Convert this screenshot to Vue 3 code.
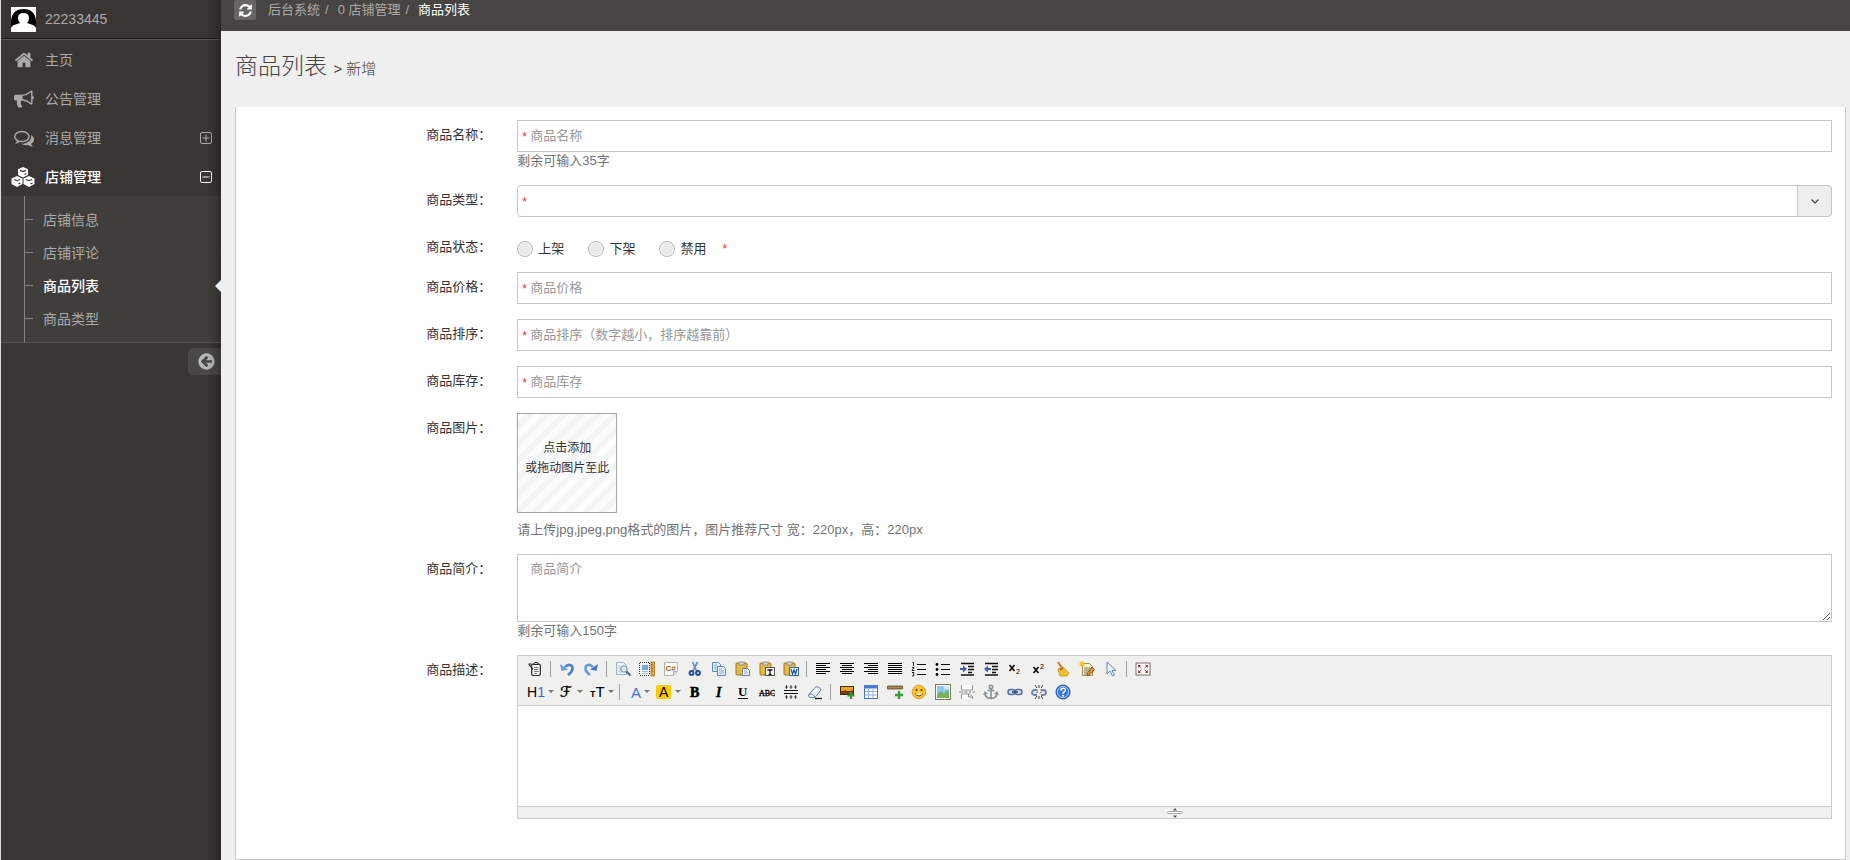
<script setup>
import { ref } from 'vue'

const fa = {
  home: 'M1472 992v480q0 26-19 45t-45 19h-384v-384h-256v384h-384q-26 0-45-19t-19-45v-480q0-1 .5-3t.5-3l575-474 575 474q1 2 1 6zm223-69l-62 74q-8 9-21 11h-3q-13 0-21-7l-692-577-692 577q-12 8-24 7-13-2-21-11l-62-74q-8-10-7-23.5t11-21.5l719-599q32-26 76-26t76 26l244 204v-195q0-14 9-23t23-9h192q14 0 23 9t9 23v408l219 182q10 8 11 21.5t-7 23.5z',
  bullhorn: 'M1664 640q53 0 90.5 37.5t37.5 90.5-37.5 90.5-90.5 37.5v384q0 52-38 90t-90 38q-417-347-812-380-58 19-91 66t-31 100.5 40 92.5q-20 33-23 65.5t6 58 33.5 55 48 50 61.5 50.5q-29 58-111.5 83t-168.5 11.5-132-55.5q-7-23-29.5-87.5t-32-94.5-23-89-15-101 3.5-98.5 22-110.5h-122q-66 0-113-47t-47-113v-192q0-66 47-113t113-47h480q435 0 896-384 52 0 90 38t38 90v384zm-128 604v-954q-394 302-768 343v270q377 42 768 341z',
  comments: 'M704 384q-153 0-286 52t-211.5 141-78.5 191q0 82 53 158t149 132l97 56-35 84q34-20 62-39l44-31 53 10q78 14 153 14 153 0 286-52t211.5-141 78.5-191-78.5-191-211.5-141-286-52zm0-128q191 0 353.5 68.5t256.5 186.5 94 257-94 257-256.5 186.5-353.5 68.5q-86 0-176-16-124 88-278 128-36 9-86 16h-3q-11 0-20.5-8t-11.5-21q-1-3-1-6.5t.5-6.5 2-6l2.5-5 3.5-5.5 4-5 4.5-5 4-4.5q5-6 23-25t26-29.5 22.5-29 25-38.5 20.5-44q-124-72-195-177t-71-224q0-139 94-257t256.5-186.5 353.5-68.5zm822 1169q10 24 20.5 44t25 38.5 22.5 29 26 29.5 23 25q1 1 4 4.5t4.5 5 4 5 3.5 5.5l2.5 5 2 6 .5 6.5-1 6.5q-3 14-13 22t-22 7q-50-7-86-16-154-40-278-128-90 16-176 16-271 0-472-132 58 4 88 4 161 0 309-45t264-129q125-92 192-212t67-254q0-77-23-152 129 71 204 178t75 230q0 120-71 224.5t-195 176.5z',
  refresh: 'M1639 1056q0 5-1 7-64 268-268 434.5t-478 166.5q-146 0-282.5-55t-243.5-157l-129 129q-19 19-45 19t-45-19-19-45v-448q0-26 19-45t45-19h448q26 0 45 19t19 45-19 45l-137 137q71 66 161 102t187 36q134 0 250-65t186-179q11-17 53-117 8-23 30-23h192q13 0 22.5 9.5t9.5 22.5zm25-800v448q0 26-19 45t-45 19h-448q-26 0-45-19t-19-45 19-45l138-138q-148-137-349-137-134 0-250 65t-186 179q-11 17-53 117-8 23-30 23h-199q-13 0-22.5-9.5t-9.5-22.5v-7q65-268 270-434.5t480-166.5q146 0 284 55.5t245 156.5l130-129q19-19 45-19t45 19 19 45z',
  back: 'M1408 960v-128q0-26-19-45t-45-19h-502l189-189q19-19 19-45t-19-45l-91-91q-18-18-45-18t-45 18l-362 362-91 91q-18 18-18 45t18 45l91 91 362 362q18 18 45 18t45-18l91-91q18-18 18-45t-18-45l-189-189h502q26 0 45-19t19-45zm256-64q0 209-103 385.5t-279.5 279.5-385.5 103-385.5-103-279.5-279.5-103-385.5 103-385.5 279.5-279.5 385.5-103 385.5 103 279.5 279.5 103 385.5z'
}

const menu = [
  { label: '主页', icon: 'home' },
  { label: '公告管理', icon: 'bullhorn' },
  { label: '消息管理', icon: 'comments', toggle: 'plus' },
  { label: '店铺管理', icon: 'cubes', toggle: 'minus', active: true }
]
const submenu = ['店铺信息', '店铺评论', '商品列表', '商品类型']
const current = '商品列表'

const board =
  '<rect x="1" y="2" width="11" height="12" rx="1" fill="#e9b845" stroke="#9a7420"/><rect x="4" y="1" width="5" height="3" fill="#d8d8d8" stroke="#777" stroke-width=".7"/>'
const lines = (rows) =>
  rows.map(([x, w], i) => `<rect x="${x}" y="${2 + i * 2}" width="${w}" height="1"/>`).join('')

const glyphs = {
  source:
    '<rect x="4.700" y="3" width="8.600" height="11.500" rx="1.500" fill="#fff" stroke="#222" stroke-width="1.200"/><path d="M6.500 3.500l1-2h3l1 2z" fill="#ddd" stroke="#222"/><path d="M7 6.500h4.500M7 8.500h4.500M7 10.500h4.500M7 12.500h3" stroke="#555" stroke-width=".8"/><path d="M1.500 3h3M2 3.500l4 5" fill="none" stroke="#222" stroke-width="1.200"/>',
  undo: '<path d="M6 6c3-3.500 8-2.500 7.500 2-.3 2.500-2 4-4.500 6" fill="none" stroke="#4f7fd0" stroke-width="2.600"/><path d="M1 3l1.500 7L9 8.500z" fill="#6a9be2"/>',
  redo: '<path d="M10 6C7 2.500 2 3.500 2.500 8c.3 2.500 2 4 4.500 6" fill="none" stroke="#6a9be2" stroke-width="2.600"/><path d="M15 3l-1.500 7L7 8.500z" fill="#4379c8"/>',
  preview:
    '<path d="M1.500 1.500h7l3 3v9h-10z" fill="#f4f8fb" stroke="#9eb0bd"/><path d="M3 5h3M3 7h3M3 9h3M3 11h4" stroke="#b5c6d6"/><circle cx="9" cy="8" r="3.200" fill="#dcecf8" stroke="#728ca4"/><path d="M11.500 10.500l4 4" stroke="#55677a" stroke-width="2"/>',
  template:
    '<path d="M1 1.500h9M1 14.500h9" stroke="#333" stroke-dasharray="1 1"/><path d="M.5 2v12M10.500 2v12" stroke="#333" stroke-dasharray="1 1"/><rect x="3" y="4" width="6" height="5" fill="#77a7dd"/><path d="M3 10.500h6M3 12.500h6" stroke="#9dbce0"/><rect x="12" y="1" width="3.500" height="14" fill="#e4a43b" stroke="#ad7420" stroke-width=".8"/><path d="M12 4h2M12 7h2M12 10h2" stroke="#84530f" stroke-width=".7"/>',
  code:
    '<path d="M1.500 1.500h13v9l-4 4h-9z" fill="#fbfaf6" stroke="#b9b3a5"/><path d="M14 10.500h-3.500v4" fill="#ddd" stroke="#b9b3a5"/><text x="2.500" y="10" font-size="8" font-weight="bold" font-family="Liberation Sans, Arial, sans-serif" fill="#8b6a20">C#</text>',
  cut: '<path d="M5.500 1l4.500 10M10.500 1L6 10" stroke="#6d8fbb" stroke-width="1.700"/><circle cx="4.500" cy="12" r="1.900" fill="none" stroke="#254f94" stroke-width="2"/><circle cx="11" cy="12" r="1.900" fill="none" stroke="#254f94" stroke-width="2"/>',
  copy:
    '<path d="M1.500 1.500h6l2 2v7h-8z" fill="#e8f1fc" stroke="#5b87c4"/><path d="M3 4h3M3 6h5M3 8h5" stroke="#86aadb"/><path d="M6.500 5.500h6l2 2v7h-8z" fill="#e8f1fc" stroke="#5b87c4"/><path d="M8 8h3M8 10h5M8 12h5" stroke="#86aadb"/>',
  paste: board + '<path d="M7.500 7.500h5l2 2v5h-7z" fill="#f3f6fb" stroke="#6d7c90"/><path d="M9 10h3M9 12h4" stroke="#8ba6c8"/>',
  plainpaste: board + '<rect x="6.500" y="6.500" width="9" height="8" fill="#fff" stroke="#555"/><path d="M8.500 9h5M11 9v5M9.500 13.500h3" stroke="#111" stroke-width="1.300"/>',
  wordpaste: board + '<rect x="6.500" y="6.500" width="9" height="8" fill="#e5efff" stroke="#3b69ae"/><path d="M8 8l1.500 5 1.500-4 1.500 4L14 8" fill="none" stroke="#2458a8" stroke-width="1.300"/>',
  left: lines([[1, 14], [1, 10], [1, 14], [1, 10], [1, 14], [1, 10]]),
  center: lines([[1, 14], [3, 10], [1, 14], [3, 10], [1, 14], [3, 10]]),
  right: lines([[1, 14], [5, 10], [1, 14], [5, 10], [1, 14], [5, 10]]),
  full: lines([[1, 14], [1, 14], [1, 14], [1, 14], [1, 14], [1, 14]]),
  ol: '<path d="M6 3.500h9M6 8.500h9M6 13.500h9" stroke="#111"/><path d="M1.500 2l1-1v4M1 6.500h2l-2 3h2.500M1 11.500h2l-1 1.500 1 .5-.5 1.500H1" fill="none" stroke="#111" stroke-width=".9"/>',
  ul: '<path d="M6 3.500h9M6 8.500h9M6 13.500h9" stroke="#111"/><circle cx="2" cy="3.500" r="1.400"/><circle cx="2" cy="8.500" r="1.400"/><circle cx="2" cy="13.500" r="1.400"/>',
  indent: '<path d="M2 2.500h13M9 5.500h6M9 8.500h6M9 11.500h4M2 14h13" stroke="#111" stroke-width="1.300"/><path d="M1 7h3V4.500L8 8l-4 3.500V9H1z" fill="#3f5d99"/>',
  outdent: '<path d="M2 2.500h13M9 5.500h6M9 8.500h6M9 11.500h4M2 14h13" stroke="#111" stroke-width="1.300"/><path d="M8 7H5V4.500L1 8l4 3.500V9h3z" fill="#3f5d99"/>',
  sub: '<path d="M2.500 4l5 6M7.500 4l-5 6" stroke="#111" stroke-width="1.700"/><text x="9" y="13" font-size="7" font-family="Liberation Sans, Arial, sans-serif">2</text>',
  sup: '<path d="M2.500 6l5 6M7.500 6l-5 6" stroke="#111" stroke-width="1.700"/><text x="9" y="8" font-size="7" font-family="Liberation Sans, Arial, sans-serif">2</text>',
  clean: '<path d="M3 1l4 6" stroke="#c57522" stroke-width="2"/><path d="M3 8l5-2 6 6-2 3H5z" fill="#f0c32d" stroke="#ca8c16" stroke-width=".8"/><path d="M5 9l3-2" stroke="#b2442a" stroke-width="1.500"/>',
  quick: '<path d="M3.500 2.500h7l3 3v9h-10z" fill="#fff5d2" stroke="#a98b4c"/><path d="M5 7h6M5 9h6M5 11h4M5 13h5" stroke="#7b705a"/><path d="M3 0v6M0 3h6M1 1l4 4M5 1L1 5" stroke="#f3c52f" stroke-width="1.100"/><path d="M13 6l2.500 2.500-4.500 5-3 1 .7-3z" fill="#df8b30" stroke="#704c25" stroke-width=".8"/>',
  select: '<path d="M4 1v12l3-3 2.500 5 2-1L9 9.500h4z" fill="#edf3fb" stroke="#6685b0"/>',
  fullscreen: '<rect x="1" y="2" width="14" height="12" fill="#fff" stroke="#776b6b"/><path d="M3 4h3L3 7zM13 4h-3l3 3zM3 12h3L3 9zM13 12h-3l3-3z" fill="#b13838"/><path d="M4 5l2.500 2M12 5L9.500 7M4 11l2.500-2M12 11L9.500 9" stroke="#b13838"/>',
  h1: '<text x="4" y="13" font-size="14" font-family="Liberation Sans, Arial, sans-serif">H<tspan fill="#3568d8">1</tspan></text>',
  font: '<text x="4" y="13" font-size="15" stroke="#000" stroke-width=".4" font-family="DejaVu Serif, DejaVu Sans, serif">ℱ</text>',
  size: '<text x="5" y="13" font-size="9" font-weight="bold" font-family="Liberation Sans, Arial, sans-serif">T<tspan font-size="15" font-weight="normal">T</tspan></text>',
  fore: '<text x="7" y="14" font-size="15" font-family="Liberation Sans, Arial, sans-serif" fill="#3b74e0">A</text>',
  hilite: '<rect x="4" y="1" width="15" height="14" rx="2" fill="#fc0"/><text x="7" y="13" font-size="14" font-family="Liberation Sans, Arial, sans-serif">A</text>',
  bold: '<text x="3" y="13" font-size="14" font-weight="bold" stroke="#000" stroke-width=".6" font-family="Liberation Serif, serif">B</text>',
  italic: '<text x="5" y="13" font-size="14" font-weight="bold" font-style="italic" stroke="#000" stroke-width=".3" font-family="Liberation Serif, serif">I</text>',
  underline: '<text x="3" y="12" font-size="13" font-weight="bold" font-family="Liberation Serif, serif">U</text><path d="M3 14.500h10" stroke="#111"/>',
  strike: '<text x="0" y="12" font-size="8" stroke="#000" stroke-width=".3" font-family="Liberation Serif, serif">ABC</text><path d="M0 9.500h16" stroke="#111" stroke-width=".6"/>',
  lineheight: '<path d="M1 6.500h14M1 9.500h14" stroke="#111"/><path d="M3.500 1v4M8 1v4M12.500 1v4M2 3h3M6.500 3h3M11 3h3M3.500 11v4M8 11v4M12.500 11v4M2 13h3M6.500 13h3M11 13h3" stroke="#111" stroke-width=".7"/>',
  eraser: '<path d="M1.500 11l7-8q4-1 5.500 3l-6 7.500H4q-2.500 0-2.500-2.500z" fill="#eef4fa" stroke="#6a7c99"/><path d="M2 10q4-1 6 3" fill="none" stroke="#6a7c99"/><path d="M8 14.500h7" stroke="#111" stroke-width="1.300"/>',
  image: '<rect x="1" y="2" width="14" height="9" fill="#3f2a12"/><rect x="2" y="3" width="12" height="4" fill="#f1a423"/><path d="M2 8l4-2 3 2 5-2v4H2z" fill="#7a3d11"/><path d="M12 8v7M8.500 11.500h7" stroke="#2f9b36" stroke-width="2.200"/>',
  table: '<rect x="1.500" y="1.500" width="13" height="13" fill="#fff" stroke="#4b72b8"/><rect x="1" y="1" width="14" height="3.500" fill="#4a7bd0"/><path d="M2 7.500h12M2 11h12M5.500 5v9M10 5v9" stroke="#8eb0e4"/>',
  hr: '<rect x="0" y="2" width="16" height="3" rx="1" fill="#a98a52" stroke="#59431c" stroke-width=".8"/><path d="M12 7v8M8 11h8" stroke="#35a03a" stroke-width="2.400"/>',
  smile: '<circle cx="8" cy="8" r="6.800" fill="#fbc62c" stroke="#d98d16" stroke-width=".8"/><circle cx="5.500" cy="6" r="1.100" fill="#5b3500"/><circle cx="10.500" cy="6" r="1.100" fill="#5b3500"/><path d="M4 9.500q4 5 8 0" fill="#fff3d0" stroke="#7a4a05"/>',
  map: '<rect x=".5" y=".5" width="15" height="15" fill="#fff" stroke="#65885f"/><rect x="2" y="2" width="12" height="12" fill="#8fc5ef"/><path d="M2 11l4-4 3 3 3-4 2 2v6H2z" fill="#76b35a"/><path d="M8 2l2 4 4-1V2z" fill="#d5ecfb"/>',
  pagebreak: '<path d="M2.500 1v5h11V1M2.500 15v-5h8l3 2.500V15" fill="#fff" stroke="#999"/><path d="M0 8h4M5.500 8h3M10 8h2M13.500 8H16M9.500 10v3h4" stroke="#888" fill="none"/>',
  anchor: '<g fill="none" stroke="#8b9199" stroke-width="1.600"><circle cx="8" cy="3" r="1.700"/><path d="M8 5v9M4.500 6.500h7M2 9q0 5 6 5.500 6-.5 6-5.500"/></g><path d="M0 11l2-4 3 3zM16 11l-2-4-3 3z" fill="#8b9199"/>',
  link: '<g fill="#d5dfef" stroke="#566f9e" stroke-width="1.500"><rect x="1" y="5.500" width="7" height="5" rx="2.500"/><rect x="8" y="5.500" width="7" height="5" rx="2.500"/></g><path d="M5 8h6" stroke="#33496f" stroke-width="1.600"/>',
  unlink: '<g fill="none" stroke="#6c82aa" stroke-width="1.800"><path d="M6.500 6H4Q1 6 1 8.500T4 11h2M9.500 6H12q3 0 3 2.500T12 11h-2"/></g><path d="M8 1v3M4 1l2 3M12 1l-2 3M8 12v3M6 12l-2 3M10 12l2 3M5 9.500l2-2M9 9.500l2-2" stroke="#333" stroke-width=".9"/>',
  about: '<circle cx="8" cy="8" r="7" fill="#3577e8" stroke="#1f4ea8"/><circle cx="8" cy="8" r="5.600" fill="none" stroke="#a9caff"/><path d="M5.800 6.500q0-2.300 2.300-2.300t2.200 2q0 1-1.200 1.700T8 9.800" fill="none" stroke="#fff" stroke-width="1.500"/><circle cx="8" cy="11.700" r="1" fill="#fff"/>'
}

const tool = (name, title, width = 16, drop = false) => ({ name, title, width, drop })
const toolbar = [
  [
    [tool('source', 'HTML代码')],
    [tool('undo', '后退'), tool('redo', '前进')],
    [tool('preview', '预览'), tool('template', '插入模板'), tool('code', '插入程序代码'), tool('cut', '剪切'), tool('copy', '复制'), tool('paste', '粘贴'), tool('plainpaste', '粘贴为无格式文本'), tool('wordpaste', '从Word粘贴')],
    [tool('left', '左对齐'), tool('center', '居中'), tool('right', '右对齐'), tool('full', '两端对齐'), tool('ol', '编号'), tool('ul', '项目符号'), tool('indent', '增加缩进'), tool('outdent', '减少缩进'), tool('sub', '下标'), tool('sup', '上标'), tool('clean', '清理HTML代码'), tool('quick', '一键排版'), tool('select', '全选')],
    [tool('fullscreen', '全屏显示')]
  ],
  [
    [tool('h1', '段落', 25, true), tool('font', '字体', 21, true), tool('size', '文字大小', 23, true)],
    [tool('fore', '文字颜色', 20, true), tool('hilite', '文字背景', 23, true), tool('bold', '粗体'), tool('italic', '斜体'), tool('underline', '下划线'), tool('strike', '删除线'), tool('lineheight', '行距'), tool('eraser', '删除格式')],
    [tool('image', '图片'), tool('table', '表格'), tool('hr', '插入横线'), tool('smile', '插入表情'), tool('map', '地图'), tool('pagebreak', '插入分页符'), tool('anchor', '锚点'), tool('link', '超级链接'), tool('unlink', '取消超级链接'), tool('about', '关于')]
  ]
]

const statuses = ['上架', '下架', '禁用']
const form = ref({ name: '', type: '', status: '', price: '', sort: '', stock: '', intro: '', detail: '' })
const numeric = [
  { key: 'price', label: '商品价格', hint: '商品价格' },
  { key: 'sort', label: '商品排序', hint: '商品排序（数字越小，排序越靠前）' },
  { key: 'stock', label: '商品库存', hint: '商品库存' }
]
</script>

<template>
  <div class="layout">
    <aside class="sidebar">
      <div class="user">
        <svg class="avatar" viewBox="0 0 25 25" aria-hidden="true">
          <rect width="25" height="25" fill="#fff" />
          <path d="M0 21V14Q1 2 12.500 2T25 14v7q-1-3-6-4l-3-1q2-2 2-5 0-5-5.500-5T7 11q0 3 2 5l-3 1q-5 1-6 4z" />
        </svg>
        <span>22233445</span>
      </div>
      <nav>
        <ul class="menu">
          <li v-for="m in menu" :key="m.label">
            <a href="#" class="menu-link" :class="{ active: m.active }">
              <svg v-if="m.icon === 'cubes'" class="cubes" viewBox="0 0 24 20" aria-hidden="true">
                <path d="M12 0l5 2.200v5.800l-5 2.500L7 8V2.200zM6 9l5.500 2.500V17L6 20l-5.500-3v-5.500zM18 9l5.500 2.500V17L18 20l-5.500-3v-5.500z" fill="currentColor" />
                <path d="M9 3.400l3 1.200 3-1.200M13.500 7.500l2-1M3 12.500l3 1.200 3-1.200M7.500 17l2-1M15 12.500l3 1.200 3-1.200M19.500 17l2-1" fill="none" stroke="#393532" stroke-width="1.200" />
              </svg>
              <svg v-else class="menu-icon" viewBox="0 0 1792 1792" aria-hidden="true">
                <path :d="fa[m.icon]" fill="currentColor" />
              </svg>
              <span class="menu-text">{{ m.label }}</span>
              <svg v-if="m.toggle" class="toggle" viewBox="0 0 12 12" aria-hidden="true">
                <rect x=".5" y=".5" width="11" height="11" rx="1.500" fill="none" stroke="currentColor" />
                <path :d="m.toggle === 'plus' ? 'M2.500 6h7M6 2.500v7' : 'M2.500 6h7'" stroke="currentColor" />
              </svg>
            </a>
          </li>
        </ul>
        <ul class="submenu">
          <li v-for="s in submenu" :key="s" :class="{ current: s === current }">
            <a href="#">{{ s }}</a>
          </li>
        </ul>
      </nav>
      <button type="button" class="collapse" aria-label="收起菜单">
        <svg viewBox="0 0 1792 1792" aria-hidden="true"><path :d="fa.back" fill="currentColor" /></svg>
      </button>
    </aside>

    <main class="main">
      <header class="topbar">
        <button type="button" class="refresh" aria-label="刷新">
          <svg viewBox="0 0 1792 1792" aria-hidden="true"><path :d="fa.refresh" fill="currentColor" /></svg>
        </button>
        <a href="#">后台系统</a><span class="slash">/</span>
        <a href="#">0 店铺管理</a><span class="slash">/</span>
        <span class="here">商品列表</span>
      </header>
      <h1 class="title">商品列表 <small>&gt; 新增</small></h1>

      <form class="panel" @submit.prevent>
        <div class="row">
          <label for="name">商品名称：</label>
          <div>
            <div class="field">
              <i class="star">*</i>
              <input id="name" v-model="form.name" type="text" placeholder="商品名称" maxlength="35" />
            </div>
            <p class="help">剩余可输入{{ 35 - form.name.length }}字</p>
          </div>
        </div>

        <div class="row">
          <label for="type">商品类型：</label>
          <div class="field">
            <i class="star">*</i>
            <select id="type" v-model="form.type"><option value=""></option></select>
            <span class="arrow">
              <svg viewBox="0 0 10 10" aria-hidden="true"><path d="M1.500 3.500L5 7l3.500-3.500" fill="none" stroke="#444" stroke-width="1.200" /></svg>
            </span>
          </div>
        </div>

        <div class="row">
          <span id="status-label" class="label short">商品状态：</span>
          <div class="radios" role="radiogroup" aria-labelledby="status-label">
            <label v-for="s in statuses" :key="s">
              <input v-model="form.status" type="radio" name="status" :value="s" />{{ s }}
            </label>
            <i class="star-inline">*</i>
          </div>
        </div>

        <div v-for="n in numeric" :key="n.key" class="row">
          <label :for="n.key">{{ n.label }}：</label>
          <div class="field">
            <i class="star">*</i>
            <input :id="n.key" v-model="form[n.key]" type="text" :placeholder="n.hint" />
          </div>
        </div>

        <div class="row">
          <span class="label">商品图片：</span>
          <div>
            <button type="button" class="upload">点击添加<br />或拖动图片至此</button>
            <p class="help spaced">请上传jpg,jpeg,png格式的图片，图片推荐尺寸 宽：220px，高：220px</p>
          </div>
        </div>

        <div class="row">
          <label for="intro">商品简介：</label>
          <div>
            <textarea id="intro" v-model="form.intro" class="intro" placeholder="商品简介" maxlength="150"></textarea>
            <p class="help">剩余可输入{{ 150 - form.intro.length }}字</p>
          </div>
        </div>

        <div class="row">
          <label for="detail">商品描述：</label>
          <div class="editor">
            <div class="toolbar">
              <div v-for="(line, i) in toolbar" :key="i" class="tool-line">
                <div v-for="(group, j) in line" :key="j" class="tool-group">
                  <button v-for="t in group" :key="t.name" type="button" :title="t.title" :aria-label="t.title" :class="{ drop: t.drop }">
                    <svg :width="t.width" height="16" :viewBox="`0 0 ${t.width} 16`" v-html="glyphs[t.name]"></svg>
                    <svg v-if="t.drop" class="caret" width="6" height="3" viewBox="0 0 6 3"><path d="M0 0h6L3 3z" fill="#777" /></svg>
                  </button>
                </div>
              </div>
            </div>
            <textarea id="detail" v-model="form.detail" class="canvas"></textarea>
            <div class="resizer">
              <svg width="16" height="10" viewBox="0 0 16 10" aria-hidden="true">
                <path d="M8 0l2 2.500H6zM8 10l2-2.500H6z" fill="#555" />
                <rect x=".5" y="3.500" width="15" height="2" rx="1" fill="#fff" stroke="#aaa" />
              </svg>
            </div>
          </div>
        </div>
      </form>
    </main>
  </div>
</template>

<style>
body {
  margin: 0;
  background: #efefef;
}
</style>

<style scoped>
.layout {
  display: grid;
  grid-template-columns: 221px minmax(0, 1fr);
  min-height: 100vh;
  box-sizing: border-box;
  font: 13px/18px "Liberation Sans", "Noto Sans CJK SC", sans-serif;
  color: #333;
}
.layout * { box-sizing: border-box; }
ul { list-style: none; margin: 0; padding: 0; }
a { color: inherit; text-decoration: none; }
button, input, select, textarea { font: inherit; margin: 0; }

.sidebar {
  position: relative;
  background: #393532;
  border-left: 1px solid #d9d9d9;
  color: #aaa;
  font-size: 14px;
}
.sidebar::after {
  content: "";
  position: absolute;
  inset: 0 0 0 auto;
  width: 14px;
  background: linear-gradient(to right, rgba(0, 0, 0, 0), rgba(0, 0, 0, 0.25));
  pointer-events: none;
}
.user {
  display: flex;
  align-items: center;
  gap: 9px;
  height: 39px;
  padding-left: 10px;
  border-bottom: 1px solid #1c1a18;
}
.avatar { width: 25px; height: 25px; }
.menu { border-top: 1px solid #5a5754; }
.menu-link {
  display: flex;
  align-items: center;
  height: 39px;
  padding: 0 9px 0 10px;
}
.menu-icon { width: 20px; height: 20px; margin: 0 7px 0 3px; }
.cubes { width: 24px; height: 20px; margin-right: 6px; }
.menu-text { flex: 1; margin-left: 4px; }
.toggle { width: 12px; height: 12px; }
.active, .current { color: #fff; font-weight: 500; }
.submenu {
  position: relative;
  padding: 8px 0 6px;
  background: #403e3b;
  border-bottom: 1px solid #5a5754;
}
.submenu::before {
  content: "";
  position: absolute;
  top: 0;
  bottom: 0;
  left: 23px;
  border-left: 1px solid #85827f;
}
.submenu li { position: relative; height: 33px; line-height: 33px; padding-left: 42px; }
.submenu a { display: block; }
.submenu li::before {
  content: "";
  position: absolute;
  left: 24px;
  top: 15px;
  width: 8px;
  border-top: 1px solid #85827f;
}
.current::after {
  content: "";
  position: absolute;
  z-index: 1;
  right: 0;
  top: 10px;
  border: 6px solid transparent;
  border-left-width: 0;
  border-right-color: #eef2fa;
}
.collapse {
  display: flex;
  align-items: center;
  justify-content: center;
  width: 33px;
  height: 27px;
  margin: 5px 0 0 auto;
  padding: 0 0 0 3px;
  border: 0;
  border-radius: 5px 0 0 5px;
  background: #4a4846;
  color: #b8b8b8;
}
.collapse svg { width: 19px; height: 19px; }

.main { display: flex; flex-direction: column; }
.topbar {
  display: flex;
  align-items: center;
  height: 31px;
  padding: 0 13px 11px;
  background: #474543;
  color: #aaa;
}
.refresh {
  display: flex;
  align-items: center;
  justify-content: center;
  width: 22px;
  height: 20px;
  margin-right: 12px;
  padding: 0;
  border: 0;
  border-radius: 2px;
  background: #686664;
  color: #fff;
}
.refresh svg { width: 15px; height: 15px; }
.slash { margin: 0 9px 0 5px; }
.here { color: #fff; }
.title {
  margin: 0;
  height: 76px;
  padding: 0 14px;
  font-size: 23px;
  font-weight: 300;
  line-height: 70px;
  color: #444;
}
.title small { font-size: 15px; }

.panel {
  flex: 1;
  display: flex;
  flex-direction: column;
  gap: 15px;
  margin: 0 4px 0 14px;
  padding: 13px 13px 40px 0;
  background: #fff;
  border: 1px solid #ccc;
  border-top: 0;
}
.row {
  display: grid;
  grid-template-columns: 16% minmax(0, 1fr);
  column-gap: 26px;
}
.row > label, .label { text-align: right; line-height: 30px; }
.short { height: 25px; }
.field { position: relative; height: 32px; }
.field input, .field select {
  display: block;
  width: 100%;
  height: 32px;
  padding: 0 12px 1px;
  border: 1px solid #c4c6c8;
  background: #fff;
  border-radius: 0;
  outline: none;
}
.field select { appearance: none; border-radius: 4px; }
::placeholder { color: #999; opacity: 1; }
.star, .star-inline { color: #e33; font-style: normal; font-size: 12px; }
.star { position: absolute; left: 5px; top: 8px; }
.arrow {
  position: absolute;
  inset: 0 0 0 auto;
  width: 35px;
  display: flex;
  align-items: center;
  justify-content: center;
  border: 1px solid #c4c6c8;
  border-radius: 0 4px 4px 0;
  background: #eee;
  pointer-events: none;
}
.arrow svg { width: 10px; height: 10px; }
.help { margin: 0; color: #737373; }
.spaced { margin-top: 8px; }
.radios { display: flex; align-items: center; height: 25px; padding-top: 8px; }
.radios label { display: flex; align-items: center; gap: 5px; margin-right: 24px; }
.radios input {
  appearance: none;
  width: 16px;
  height: 16px;
  border: 1px solid #b5b5b5;
  border-radius: 50%;
  background: #ebebeb;
  box-shadow: inset 0 0 0 1px #f8f8f8;
}
.star-inline { margin-left: -8px; }
.upload {
  display: block;
  width: 100px;
  height: 100px;
  padding: 0 0 10px;
  border: 1px solid #a5a5a5;
  background: repeating-linear-gradient(135deg, #fcfcfd 0 6px, #f2f4f6 6px 12px);
  color: #333;
  font-size: 12px;
  line-height: 20px;
}
.intro {
  display: block;
  width: 100%;
  height: 68px;
  padding: 5px 12px;
  border: 1px solid #c4c6c8;
  outline: none;
}
.editor { border: 1px solid #ccc; }
.toolbar {
  height: 50px;
  padding: 1px 5px;
  background: #f0f0ee;
  border-bottom: 1px solid #ccc;
}
.tool-line { display: flex; height: 23px; }
.tool-group { display: flex; }
.tool-group + .tool-group::before {
  content: "";
  width: 1px;
  height: 16px;
  margin: 4px 4px 0 3px;
  background: #a0a0a0;
}
.tool-group button {
  display: flex;
  align-items: center;
  padding: 0 4px;
  border: 0;
  background: none;
}
.tool-group .drop { padding: 0; }
.caret { margin-right: 2px; }
.canvas {
  display: block;
  width: 100%;
  height: 100px;
  border: 0;
  outline: none;
  resize: none;
}
.resizer {
  display: flex;
  justify-content: center;
  align-items: center;
  height: 12px;
  background: #f0f0ee;
  border-top: 1px solid #ccc;
}
</style>
